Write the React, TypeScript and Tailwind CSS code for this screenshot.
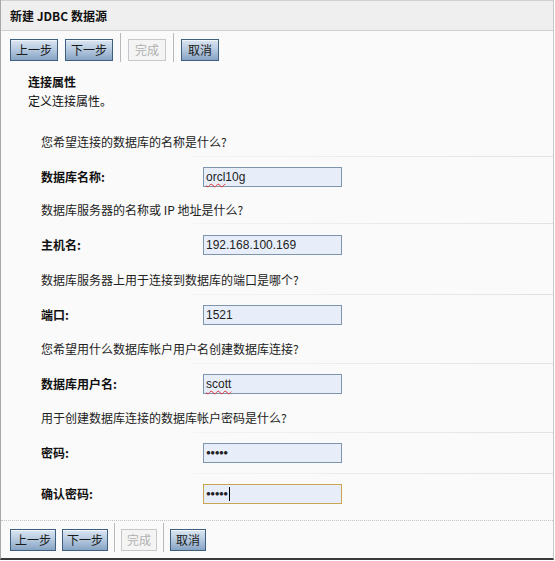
const font = "font-['SimSun','Noto_Sans_CJK_SC',sans-serif]";

interface IToolbarProps {
  compact?: boolean;
}

const Btn: React.FC<{ label: string; disabled?: boolean; w: string }> = ({ label, disabled, w }) => (
  <div
    className={
      disabled
        ? `${w} h-[22px] mt-[6px] flex items-center justify-center border border-[#c8c8c8] bg-[#f4f4f4] text-[#b0b0b0] text-[12px]`
        : `${w} h-[22px] mt-[6px] flex items-center justify-center border border-[#3f5f80] bg-linear-to-b from-[#dbe6f2] via-[#b4c8de] to-[#87a4c4] text-[#1a1a1a] text-[12px] shadow-[inset_0_1px_0_#eef4fa]`
    }
  >
    {label}
  </div>
);

const Sep = () => <div className="w-px h-[29px] bg-[#b8b8b8]" />;

const Toolbar: React.FC<IToolbarProps> = ({ compact = false }) => (
  <div className={`flex items-start ${compact ? 'pl-[9px] gap-[6px]' : 'pl-[9px] gap-[7px]'}`}>
    <Btn label="上一步" w={compact ? 'w-[46px]' : 'w-[48px]'} />
    <Btn label="下一步" w={compact ? 'w-[46px]' : 'w-[48px]'} />
    <Sep />
    <Btn label="完成" disabled w={compact ? 'w-[36px]' : 'w-[38px]'} />
    <Sep />
    <Btn label="取消" w={compact ? 'w-[36px]' : 'w-[38px]'} />
  </div>
);

const Question: React.FC<{ text: string; h: string }> = ({ text, h }) => (
  <div className={`${h} flex items-center pl-[40px] text-[12px] text-[#222]`}>{text}</div>
);

const Line = () => <div className="ml-[190px] h-px bg-linear-to-r from-[#f4f4f4] to-[#e2e2e2]" />;

const Field: React.FC<{
  label: string;
  h: string;
  children: React.ReactNode;
  focused?: boolean;
}> = ({ label, h, children, focused }) => (
  <div className={`${h} flex items-center`}>
    <div className="w-[202px] pl-[40px] text-[12px] font-bold text-[#111]">{label}</div>
    <div
      className={`w-[139px] h-[20px] flex items-center pl-[2px] bg-[#e7eefa] border ${
        focused ? 'border-[#c9a552]' : 'border-[#7f95ad]'
      } font-['Liberation_Sans',sans-serif] text-[12px] text-[#222]`}
    >
      {children}
    </div>
  </div>
);

const Dots = () => <span className="text-[8px] tracking-[-0.5px] font-bold leading-none">●●●●●</span>;

export default function App() {
  return (
    <div className={`w-[555px] h-[561px] bg-white ${font}`}>
      <div className="w-[554px] h-[560px] border-l border-l-[#a8a8a8] border-r border-r-[#c8c8c8] border-b-2 border-b-[#3a3a3a] bg-[#fafafa] flex flex-col">
        <div className="h-[31px] shrink-0 flex items-center pl-[9px] border-t border-t-[#d0d0d0] border-b border-b-[#cfcfcf] bg-[#efefef] text-[12px] font-bold text-[#111]">
          新建 JDBC 数据源
        </div>
        <div className="pt-[2px] shrink-0">
          <Toolbar />
        </div>
        <div className="pt-[10px] pl-[27px] text-[12px] text-[#111] shrink-0">
          <div className="h-[19px] flex items-center font-bold">连接属性</div>
          <div className="h-[19px] flex items-center">定义连接属性。</div>
        </div>
        <div className="pt-[18px] shrink-0">
          <Question text="您希望连接的数据库的名称是什么?" h="h-[28px]" />
          <Line />
          <Field label="数据库名称:" h="h-[40px]">
            <span className="underline decoration-wavy decoration-[#e03030] decoration-1 underline-offset-2">orcl</span>
            <span>10g</span>
          </Field>
          <Question text="数据库服务器的名称或 IP 地址是什么?" h="h-[26px]" />
          <Line />
          <Field label="主机名:" h="h-[42px]">
            192.168.100.169
          </Field>
          <Question text="数据库服务器上用于连接到数据库的端口是哪个?" h="h-[28px]" />
          <Line />
          <Field label="端口:" h="h-[40px]">
            1521
          </Field>
          <Question text="您希望用什么数据库帐户用户名创建数据库连接?" h="h-[28px]" />
          <Line />
          <Field label="数据库用户名:" h="h-[40px]">
            <span className="underline decoration-wavy decoration-[#e03030] decoration-1 underline-offset-2">scott</span>
          </Field>
          <Question text="用于创建数据库连接的数据库帐户密码是什么?" h="h-[28px]" />
          <Line />
          <Field label="密码:" h="h-[40px]">
            <Dots />
          </Field>
          <Line />
          <Field label="确认密码:" h="h-[40px]" focused>
            <Dots />
            <span className="w-px h-[14px] bg-black ml-[1px]" />
          </Field>
        </div>
        <div className="mt-[6px] shrink-0 border-t border-dotted border-t-[#c4c4c4]" />
        <div className="pt-[2px] shrink-0">
          <Toolbar compact />
        </div>
      </div>
    </div>
  );
}
